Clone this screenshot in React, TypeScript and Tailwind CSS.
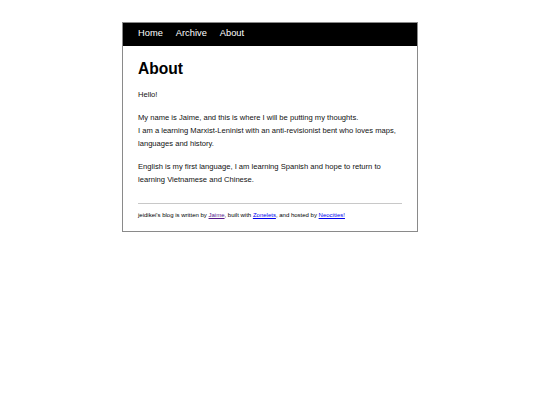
import React from 'react';

const navLinks = ['Home', 'Archive', 'About'];

export default function App() {
  return (
    <div className="min-h-screen bg-white pt-[22px] font-['Liberation_Sans',Arial,sans-serif] text-black">
      <div className="mx-auto w-[296px] border border-[#8a8a8a]">
        {/* Nav */}
        <nav className="flex h-[23px] items-center gap-[13px] bg-black px-[15px] pb-[1px] text-[9.3px] text-white">
          {navLinks.map((link) => (
            <span key={link}>{link}</span>
          ))}
        </nav>

        {/* Content */}
        <div className="px-[15px] pb-[12px]">
          <h1 className="mt-[12px] text-[15.6px] font-bold leading-[22px]">About</h1>
          <div className="mt-[8px] text-[7.6px] leading-[13px] text-[#111]">
            <p>Hello!</p>
            <p className="mt-[10px]">
              My name is Jaime, and this is where I will be putting my thoughts.
              <br />
              I am a learning Marxist-Leninist with an anti-revisionist bent who loves maps, languages and history.
            </p>
            <p className="mt-[10px]">
              English is my first language, I am learning Spanish and hope to return to learning Vietnamese and Chinese.
            </p>
          </div>

          <hr className="mt-[17px] border-t border-[#c8c8c8]" />

          <p className="mt-[7px] text-[6px] leading-[8px]">
            jeidikei's blog is written by{' '}
            <a href="#" className="text-[#551a8b] underline">Jaime</a>, built with{' '}
            <a href="#" className="text-[#0000ee] underline">Zonelets</a>, and hosted by{' '}
            <a href="#" className="text-[#0000ee] underline">Neocities!</a>
          </p>
        </div>
      </div>
    </div>
  );
}
